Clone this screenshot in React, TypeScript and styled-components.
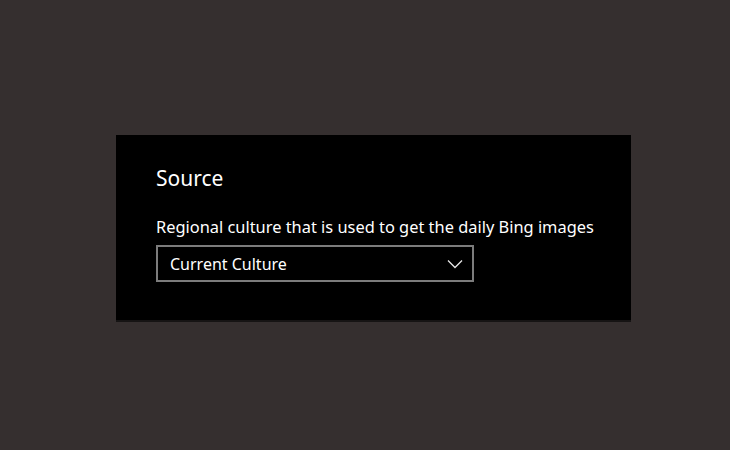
import React from "react";
import styled, { createGlobalStyle } from "styled-components";

const Global = createGlobalStyle`
  html, body { margin: 0; padding: 0; background: #352f2f; }
  body { width: 730px; height: 450px; overflow: hidden; font-family: "Noto Sans", "Open Sans", sans-serif; }
`;

const Page = styled.div`
  width: 730px;
  height: 450px;
  padding: 135px 0 0 116px;
  box-sizing: border-box;
`;

const Panel = styled.section`
  width: 515px;
  height: 187px;
  box-sizing: border-box;
  background: #000;
  border-bottom: 2px solid #161414;
  padding: 29px 0 0 40px;
  display: flex;
  flex-direction: column;
`;

const Title = styled.h2`
  margin: 0;
  font-size: 21px;
  font-weight: 400;
  line-height: 28px;
  color: #fff;
`;

const Label = styled.div`
  margin-top: 24px;
  font-size: 16.4px;
  line-height: 22px;
  color: #fff;
`;

const Select = styled.div`
  margin-top: 7px;
  width: 318px;
  height: 37px;
  box-sizing: border-box;
  border: 2px solid #7c7c7c;
  display: flex;
  align-items: center;
  justify-content: space-between;
  padding: 0 9px 0 12px;
  color: #fff;
  font-size: 16px;
`;

export default function App() {
  return (
    <>
      <Global />
      <Page>
        <Panel>
          <Title>Source</Title>
          <Label>Regional culture that is used to get the daily Bing images</Label>
          <Select>
            <span>Current Culture</span>
            <svg width="16" height="10" viewBox="0 0 16 10" fill="none">
              <path d="M1 1.5 L8 8.5 L15 1.5" stroke="#e6e6e6" strokeWidth="1.3" />
            </svg>
          </Select>
        </Panel>
      </Page>
    </>
  );
}
